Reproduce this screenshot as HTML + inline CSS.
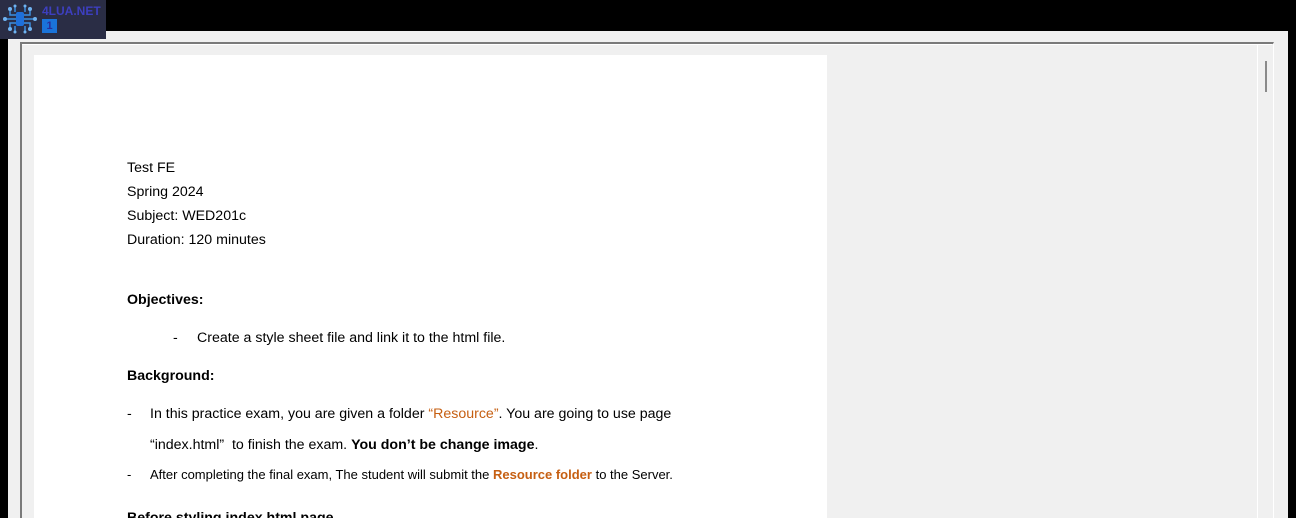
<!DOCTYPE html>
<html style="height:518px;overflow:hidden"><head><style>
body{margin:0;width:1296px;height:518px;background:#000;position:relative;overflow:hidden;font-family:"Liberation Sans",sans-serif;color:#000}
.abs{position:absolute}
.t{position:absolute;font-size:14.2px;letter-spacing:0;white-space:nowrap;line-height:16px}
b{font-weight:bold}
.o{color:#c65f12}
</style></head><body>
<div class="abs" style="left:8px;top:31px;width:1280px;height:487px;background:#f0f0f0"></div>
<div class="abs" style="left:20px;top:42px;width:1254px;height:476px;border-left:2px solid #7a7a7a;border-top:2px solid #7a7a7a;border-right:1px solid #fff;box-sizing:border-box"></div>
<div class="abs" style="left:22px;top:44px;width:1250px;height:1px;background:#fff"></div>
<div class="abs" style="left:1257px;top:44px;width:1px;height:474px;background:#fff"></div>
<div class="abs" style="left:1265px;top:61px;width:2px;height:31px;background:#8a8a8a"></div>
<div class="abs" style="left:34px;top:55px;width:793px;height:463px;background:#fff"></div>
<div class="abs" style="left:0;top:0;width:106px;height:39px;background:#2a2d45"></div>
<svg class="abs" style="left:2px;top:2px" width="36" height="34" viewBox="0 0 36 34"><g stroke="#3b8fe0" stroke-width="1.5" fill="none"><path d="M8 8v5h6M8 26v-5h6M22 13h6V8M22 21h6v5M4 17h10M22 17h10M13 5v5M23 5v5M13 29v-5M23 29v-5"/></g><rect x="14" y="10" width="8" height="14" rx="2" fill="#1e6fd9"/><g fill="#6fb3f0"><circle cx="8" cy="7" r="2"/><circle cx="28" cy="7" r="2"/><circle cx="8" cy="27" r="2"/><circle cx="28" cy="27" r="2"/><circle cx="3" cy="17" r="2"/><circle cx="33" cy="17" r="2"/><circle cx="13" cy="4" r="1.5"/><circle cx="23" cy="4" r="1.5"/><circle cx="13" cy="30" r="1.5"/><circle cx="23" cy="30" r="1.5"/></g></svg>
<div class="abs" style="left:42px;top:4px;font-size:12px;font-weight:bold;color:#3d3fbf">4LUA.NET</div>
<div class="abs" style="left:42px;top:19px;width:15px;height:14px;background:#1a73d9;color:#2a2d9a;font-size:11px;font-weight:bold;text-align:center;line-height:14px">1</div>
<div class="t" style="left:127px;top:160px">Test FE</div>
<div class="t" style="left:127px;top:184px">Spring 2024</div>
<div class="t" style="left:127px;top:208px">Subject: WED201c</div>
<div class="t" style="left:127px;top:232px">Duration: 120 minutes</div>
<div class="t" style="left:127px;top:292px"><b>Objectives:</b></div>
<div class="t" style="left:173px;top:330px">-</div>
<div class="t" style="left:197px;top:330px">Create a style sheet file and link it to the html file.</div>
<div class="t" style="left:127px;top:368px"><b>Background:</b></div>
<div class="t" style="left:127px;top:406px">-</div>
<div class="t" style="left:150px;top:406px">In this practice exam, you are given a folder <span class="o">“Resource”</span>. You are going to use page</div>
<div class="t" style="left:150px;top:437px">“index.html”&nbsp; to finish the exam. <b>You don’t be change image</b>.</div>
<div class="t" style="left:127px;top:467px;font-size:13px">-</div>
<div class="t" style="left:150px;top:467px;font-size:13px">After completing the final exam, The student will submit the <b class="o">Resource folder</b> to the Server.</div>
<div class="t" style="left:127px;top:510px"><b>Before styling index.html page</b></div>
</body></html>
